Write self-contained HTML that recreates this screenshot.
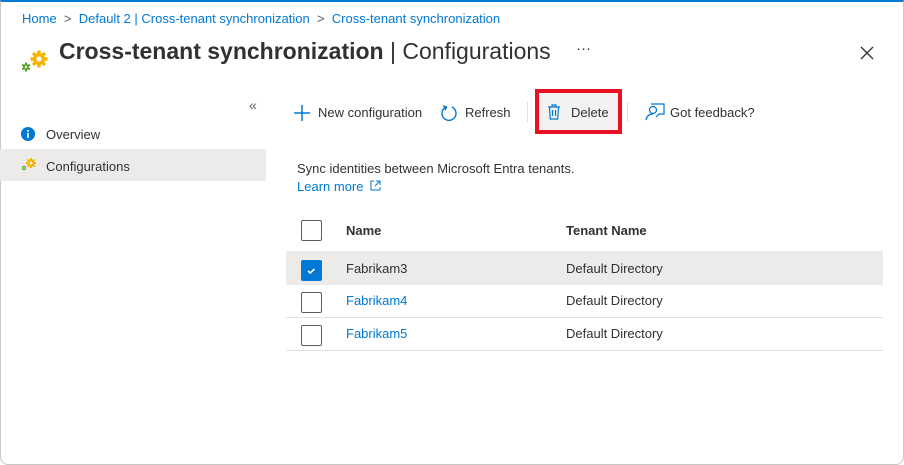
<!DOCTYPE html>
<html><head><meta charset="utf-8"><style>
*{margin:0;padding:0;box-sizing:border-box}
body{width:904px;height:465px;background:#fff;font-family:"Liberation Sans",sans-serif;color:#323130;position:relative;overflow:hidden}
.frame{position:absolute;left:0;top:0;width:904px;height:465px;border:1px solid #c8c6c4;border-top:2px solid #0078d4;border-radius:0 0 8px 8px}
.a{position:absolute;white-space:nowrap}
.bc{top:11px;font-size:13px;color:#0078d4}
.chev{color:#605e5c}
.tb{top:105px;font-size:13px;color:#323130}
.cb{position:absolute;left:301px;width:21px;height:21px;border:1px solid #605e5c;border-radius:2px;background:#fff}
.row{position:absolute;left:286px;width:597px;border-bottom:1px solid #e1dfdd}
.cell{position:absolute;font-size:13px}
</style></head><body>
<div class="frame"></div>
<div class="a bc" style="left:22px">Home <span class="chev">&nbsp;&gt;&nbsp;</span> Default 2 | Cross-tenant synchronization <span class="chev">&nbsp;&gt;&nbsp;</span> Cross-tenant synchronization</div>
<svg class="a" style="left:20px;top:48px" width="30" height="25" viewBox="0 0 30 25">
<g fill="#f5b400"><circle cx="19" cy="11" r="6"/>
<rect x="17.3" y="2.5" width="3.4" height="17" rx="0.5"/>
<rect x="17.3" y="2.5" width="3.4" height="17" rx="0.5" transform="rotate(45 19 11)"/>
<rect x="17.3" y="2.5" width="3.4" height="17" rx="0.5" transform="rotate(90 19 11)"/>
<rect x="17.3" y="2.5" width="3.4" height="17" rx="0.5" transform="rotate(135 19 11)"/></g>
<circle cx="19" cy="11" r="2.6" fill="#fff"/>
<g fill="#5ba325"><circle cx="6" cy="19" r="3"/>
<rect x="5" y="14.5" width="2" height="9"/><rect x="5" y="14.5" width="2" height="9" transform="rotate(60 6 19)"/><rect x="5" y="14.5" width="2" height="9" transform="rotate(120 6 19)"/></g>
<circle cx="6" cy="19" r="1.2" fill="#fff"/></svg>
<div class="a" style="left:59px;top:38px;font-size:23px;color:#323130"><span style="font-weight:600">Cross-tenant synchronization</span> | Configurations</div>
<div class="a" style="left:576px;top:40px;font-size:15px;color:#323130">···</div>
<svg class="a" style="left:860px;top:46px" width="14" height="14"><path d="M1 1L13 13M13 1L1 13" stroke="#323130" stroke-width="1.3"/></svg>
<div class="a" style="left:249px;top:97px;font-size:14px;color:#605e5c">«</div>
<svg class="a" style="left:21px;top:127px" width="14" height="14"><circle cx="7" cy="7" r="7" fill="#0078d4"/><rect x="6.2" y="6" width="1.6" height="5" fill="#fff"/><circle cx="7" cy="4" r="1" fill="#fff"/></svg>
<div class="a" style="left:46px;top:127px;font-size:13px">Overview</div>
<div class="a" style="left:0;top:149px;width:266px;height:32px;background:#edebe9"></div>
<svg class="a" style="left:20px;top:157px" width="18" height="16" viewBox="0 0 18 16">
<g fill="#f5b400"><circle cx="11" cy="6" r="3.5"/><rect x="10" y="1" width="2" height="10"/><rect x="10" y="1" width="2" height="10" transform="rotate(45 11 6)"/><rect x="10" y="1" width="2" height="10" transform="rotate(90 11 6)"/><rect x="10" y="1" width="2" height="10" transform="rotate(135 11 6)"/></g>
<circle cx="11" cy="6" r="1.4" fill="#fff"/><circle cx="4" cy="11" r="2.2" fill="#5ba325"/><circle cx="4" cy="11" r="0.9" fill="#fff"/></svg>
<div class="a" style="left:46px;top:159px;font-size:13px">Configurations</div>
<svg class="a" style="left:293px;top:104px" width="18" height="18"><path d="M9 1V17M1 9H17" stroke="#0078d4" stroke-width="1.5"/></svg>
<div class="a tb" style="left:318px">New configuration</div>
<svg class="a" style="left:440px;top:104px" width="18" height="18"><path d="M6 3A7 7 0 1 0 12 3" fill="none" stroke="#0078d4" stroke-width="1.4"/><path d="M3 2L6.5 3L5 6.3" fill="none" stroke="#0078d4" stroke-width="1.4"/></svg>
<div class="a tb" style="left:465px">Refresh</div>
<div class="a" style="left:527px;top:102px;width:1px;height:20px;background:#e1dfdd"></div>
<div class="a" style="left:535px;top:89px;width:87px;height:45px;border:4px solid #e81123;background:#f3f2f1"></div>
<svg class="a" style="left:547px;top:104px" width="14" height="16"><path d="M1 3H13M5 3V1H9V3M2.5 3L3.3 15H10.7L11.5 3M5.5 6V12M8.5 6V12" fill="none" stroke="#0078d4" stroke-width="1.2"/></svg>
<div class="a tb" style="left:571px">Delete</div>
<div class="a" style="left:627px;top:102px;width:1px;height:20px;background:#e1dfdd"></div>
<svg class="a" style="left:645px;top:103px" width="20" height="18"><circle cx="8" cy="7" r="3.5" fill="none" stroke="#0078d4" stroke-width="1.2"/><path d="M1 17C2 12 5 11 8 11M6 1H19V11H14L11 14" fill="none" stroke="#0078d4" stroke-width="1.2"/></svg>
<div class="a tb" style="left:670px">Got feedback?</div>
<div class="a" style="left:297px;top:161px;font-size:13px">Sync identities between Microsoft Entra tenants.</div>
<div class="a" style="left:297px;top:179px;font-size:13px;color:#0078d4">Learn more <svg width="11" height="11" style="margin-left:3px"><path d="M4 1H1V10H10V7M6 1H10V5M10 1L5 6" fill="none" stroke="#0078d4" stroke-width="1"/></svg></div>
<div class="cb" style="top:220px"></div>
<div class="cell" style="left:346px;top:223px;font-weight:bold">Name</div>
<div class="cell" style="left:566px;top:223px;font-weight:bold">Tenant Name</div>
<div class="row" style="top:251px;height:34px;background:#edebe9;border-bottom:none"></div>
<div class="cb" style="top:260px;background:#0078d4;border-color:#0078d4"><svg width="19" height="19"><path d="M6 10L8.2 12L12.5 8" fill="none" stroke="#fff" stroke-width="1.6"/></svg></div>
<div class="cell" style="left:346px;top:261px">Fabrikam3</div>
<div class="cell" style="left:566px;top:261px">Default Directory</div>
<div class="row" style="top:285px;height:33px"></div>
<div class="cb" style="top:292px"></div>
<div class="cell" style="left:346px;top:293px;color:#0078d4">Fabrikam4</div>
<div class="cell" style="left:566px;top:293px">Default Directory</div>
<div class="row" style="top:318px;height:33px"></div>
<div class="cb" style="top:325px"></div>
<div class="cell" style="left:346px;top:326px;color:#0078d4">Fabrikam5</div>
<div class="cell" style="left:566px;top:326px">Default Directory</div>
</body></html>
